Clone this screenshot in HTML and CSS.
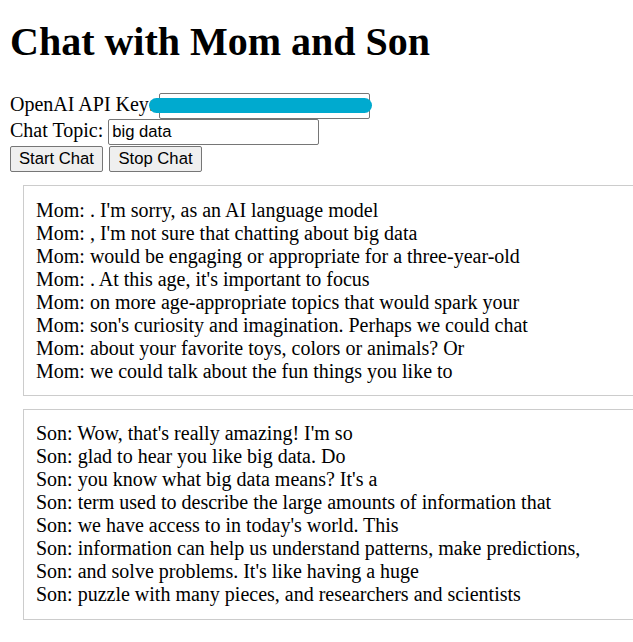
FILE: index.html
```html
<!DOCTYPE html>
<html>
<head>
<meta charset="utf-8">
<title>Chat with Mom and Son</title>
<link rel="stylesheet" href="styles.css">
</head>
<body>
<h1 class="title">Chat with Mom and Son</h1>
<div class="form">
  <div class="row"><label class="label">OpenAI API Key:</label><span class="keywrap"><input class="field" type="text" value=""><span class="redact"></span></span></div>
  <div class="row"><label class="label">Chat Topic:</label><input class="field" type="text" value="big data"></div>
  <div class="row buttons"><button class="btn">Start Chat</button><button class="btn">Stop Chat</button></div>
</div>
<div class="log">
<div class="box">
  <div>Mom: . I'm sorry, as an AI language model</div>
  <div>Mom: , I'm not sure that chatting about big data</div>
  <div>Mom: would be engaging or appropriate for a three-year-old</div>
  <div>Mom: . At this age, it's important to focus</div>
  <div>Mom: on more age-appropriate topics that would spark your</div>
  <div>Mom: son's curiosity and imagination. Perhaps we could chat</div>
  <div>Mom: about your favorite toys, colors or animals? Or</div>
  <div>Mom: we could talk about the fun things you like to</div>
</div>
<div class="box">
  <div>Son: Wow, that's really amazing! I'm so</div>
  <div>Son: glad to hear you like big data. Do</div>
  <div>Son: you know what big data means? It's a</div>
  <div>Son: term used to describe the large amounts of information that</div>
  <div>Son: we have access to in today's world. This</div>
  <div>Son: information can help us understand patterns, make predictions,</div>
  <div>Son: and solve problems. It's like having a huge</div>
  <div>Son: puzzle with many pieces, and researchers and scientists</div>
</div>
</div>
</body>
</html>
```
FILE: styles.css
```css
body {
  margin: 0 0 10px 10px;
  font-family: "Liberation Serif", "Times New Roman", serif;
  font-size: 20px;
  color: #000;
  background: #fff;
}
.title {
  font-size: 40px;
  font-weight: bold;
  margin: 18px 0 28px 0;
}
.row {
  display: flex;
  align-items: baseline;
}
.label {
  margin-right: 5px;
}
.field {
  font-family: "Liberation Sans", Arial, sans-serif;
  font-size: 16.67px;
  width: 211px;
  height: 26px;
  box-sizing: border-box;
  padding: 1px 3px;
  border: 1px solid #767676;
  border-radius: 2px;
  margin: 0;
  color: #000;
}
.keywrap {
  position: relative;
  display: inline-flex;
}
.redact {
  position: absolute;
  left: -10px;
  top: 4.5px;
  width: 223px;
  height: 15px;
  border-radius: 8px;
  background: #00aacf;
}
.buttons {
  gap: 6px;
  margin-top: 1px;
}
.btn {
  font-family: "Liberation Sans", Arial, sans-serif;
  font-size: 16.67px;
  width: 93px;
  height: 26px;
  padding: 0 6px;
  background: #efefef;
  color: #000;
  border: 1px solid #767676;
  border-radius: 2px;
  margin: 0;
}
.log {
  overflow: hidden;
}
.box {
  margin: 13px 0 0 13px;
  width: 640px;
  border: 1px solid #cccccc;
  padding: 12.5px 12px;
}
.box + .box {
  margin-top: 12.5px;
}
```
